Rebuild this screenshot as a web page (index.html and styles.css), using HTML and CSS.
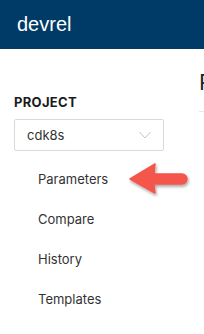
FILE: index.html
```html
<!DOCTYPE html>
<html>
<head>
<meta charset="utf-8">
<link rel="stylesheet" href="styles.css">
</head>
<body>
<header class="topbar"><span class="brand">devrel</span></header>
<div class="layout">
  <aside class="sidebar">
    <div class="section-title">PROJECT</div>
    <div class="select">
      <span class="select-value">cdk8s</span>
      <svg class="chevron" width="12" height="8" viewBox="0 0 12 8"><path d="M0.5 1 L6 7 L11.5 1" fill="none" stroke="#c4c4c4" stroke-width="1"/></svg>
    </div>
    <nav class="nav">
      <div class="nav-item">Parameters
        <svg class="arrow" width="64" height="40" viewBox="0 0 64 40">
          <defs>
            <filter id="sh" x="-20%" y="-20%" width="140%" height="150%">
              <feDropShadow dx="1" dy="2" stdDeviation="1.5" flood-color="#000" flood-opacity="0.35"/>
            </filter>
          </defs>
          <path d="M1 18 L26 3 L25 13 L53 13 A5 5 0 0 1 53 23 L25 23 L26 32 Z" fill="#f4564c" stroke="#f4564c" stroke-width="1.5" stroke-linejoin="round" filter="url(#sh)"/>
        </svg>
      </div>
      <div class="nav-item">Compare</div>
      <div class="nav-item">History</div>
      <div class="nav-item">Templates</div>
    </nav>
  </aside>
  <main class="main">
    <h1 class="page-title">Parameters</h1>
  </main>
</div>
</body>
</html>
```
FILE: styles.css
```css
html, body {
  margin: 0;
  padding: 0;
  background: #fff;
  overflow: hidden;
}
body {
  font-family: Inter, "Noto Sans", sans-serif;
  color: #333;
  width: 204px;
  height: 334px;
}
.topbar {
  height: 49px;
  background: #003a66;
  display: flex;
  align-items: center;
  padding-left: 17px;
  box-sizing: border-box;
}
.brand {
  color: #fff;
  font-family: "Liberation Sans", Arial, sans-serif;
  font-size: 20px;
  line-height: 1;
  margin-top: -2px;
}
.layout {
  display: flex;
  width: 204px;
}
.sidebar {
  width: 197px;
  flex: none;
  padding: 45px 0 0 14px;
  box-sizing: border-box;
}
.section-title {
  font-weight: 700;
  font-size: 13px;
  line-height: 16px;
  color: #1a1a1a;
  letter-spacing: 0.3px;
}
.select {
  margin-top: 9px;
  width: 150px;
  height: 32px;
  box-sizing: border-box;
  border: 1px solid #d9d9d9;
  border-radius: 2px;
  display: flex;
  align-items: center;
  justify-content: space-between;
  padding: 0 12px 0 12px;
}
.select-value {
  font-size: 13px;
  color: #333;
}
.nav {
  display: flex;
  flex-direction: column;
  padding-left: 24px;
  margin-top: 8px;
}
.nav-item {
  position: relative;
  height: 40px;
  line-height: 40px;
  font-size: 13px;
  color: #333;
}
.arrow {
  position: absolute;
  left: 91px;
  top: 2px;
}
.main {
  flex: 1;
  min-width: 0;
  padding-left: 2px;
  padding-top: 18px;
  overflow: hidden;
}
.page-title {
  margin: 0;
  font-size: 22px;
  font-weight: 400;
  line-height: 30px;
  color: #222;
  white-space: nowrap;
  padding-bottom: 14px;
  border-bottom: 1px solid #e8e8e8;
}
```
